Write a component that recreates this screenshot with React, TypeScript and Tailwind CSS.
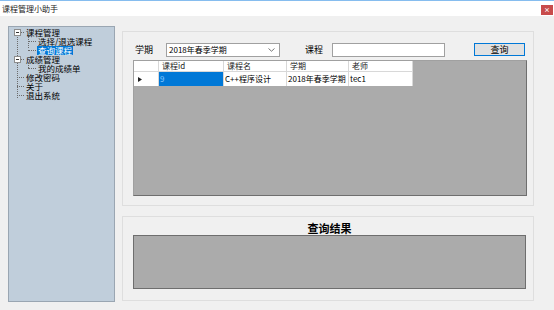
import React from "react";

const font = { fontFamily: '"Noto Sans CJK SC", "Noto Sans", sans-serif' };

const tree = [
  { label: "课程管理", depth: 0, toggle: true },
  { label: "选择/退选课程", depth: 1 },
  { label: "查询课程", depth: 1, selected: true },
  { label: "成绩管理", depth: 0, toggle: true },
  { label: "我的成绩单", depth: 1 },
  { label: "修改密码", depth: 0 },
  { label: "关于", depth: 0 },
  { label: "退出系统", depth: 0 },
];

const cols = [
  { name: "课程id", w: "w-[65px]" },
  { name: "课程名", w: "w-[63px]" },
  { name: "学期", w: "w-[62px]" },
  { name: "老师", w: "w-[64px]" },
];

const row = ["9", "C++程序设计", "2018年春季学期", "tec1"];

function Tree() {
  return (
    <div className="relative w-[107px] h-[276px] mt-[10px] bg-[#c0cedb] border border-[#9aa6b2] pt-[1px] text-[8.5px] text-black">
      {/* dotted connector lines */}
      <div className="absolute left-[8px] top-[8px] h-[63px] border-l border-dotted border-[#6b6b6b]" />
      <div className="absolute left-[19px] top-[9px] h-[12px] border-l border-dotted border-[#6b6b6b]" />
      <div className="absolute left-[19px] top-[36px] h-[5px] border-l border-dotted border-[#6b6b6b]" />
      {tree.map((t, i) => (
        <div key={i} className="relative flex items-center h-[9px]">
          <div className={t.depth === 0 ? "w-[16px] shrink-0" : "w-[28px] shrink-0"} />
          <div className={t.depth === 0 ? "absolute left-[8px] top-[4px] w-[7px] border-t border-dotted border-[#6b6b6b]" : "absolute left-[19px] top-[4px] w-[8px] border-t border-dotted border-[#6b6b6b]"} />
          {t.toggle && (
            <div className="absolute left-[5px] top-[1px] w-[7px] h-[7px] bg-white border border-[#8d8d8d] flex items-center justify-center">
              <div className="w-[3px] h-px bg-[#333]" />
            </div>
          )}
          <span className={t.selected ? "bg-[#0078d7] text-white px-px leading-[9px]" : "px-px leading-[9px]"}>{t.label}</span>
        </div>
      ))}
    </div>
  );
}

export default function App() {
  return (
    <div className="w-[554px] h-[310px] bg-[#f0f0f0] overflow-hidden text-black" style={font}>
      {/* title bar */}
      <div className="h-[16px] bg-white border-t border-[#86bdef] flex items-center justify-between pl-[2px] pr-[1px]">
        <span className="text-[8px] leading-[8px] text-[#222]">课程管理小助手</span>
        <div className="w-[12px] h-[10px] bg-[#c84b4b] flex items-center justify-center mt-[2px]">
          <span className="text-white text-[6px] leading-[6px] font-bold">×</span>
        </div>
      </div>

      <div className="flex pl-[8px]">
        <Tree />

        <div className="flex flex-col ml-[7px] mt-[15px] w-[412px] gap-[10px]">
          {/* query group */}
          <div className="h-[175px] border border-[#dedede] pl-[10px] pr-[6px] pt-[10px]">
            <div className="flex items-center h-[15px] text-[9px] leading-[9px]">
              <span className="ml-[2px] w-[31px]">学期</span>
              <div className="w-[114px] h-[14px] bg-white border border-[#a0a0a0] flex items-center justify-between pl-[2px] pr-[4px] text-[8px]">
                <span>2018年春季学期</span>
                <svg width="7" height="4" viewBox="0 0 7 4"><path d="M0.5 0.5 L3.5 3.2 L6.5 0.5" fill="none" stroke="#555" strokeWidth="0.8" /></svg>
              </div>
              <span className="ml-[25px] w-[27px]">课程</span>
              <div className="w-[113px] h-[14px] bg-white border border-[#a0a0a0]" />
              <div className="ml-[29px] w-[51px] h-[13px] bg-[#e1e1e1] border border-[#0078d7] flex items-center justify-center text-[9px]">查询</div>
            </div>

            <div className="mt-[3px] h-[136px] bg-[#ababab] border border-[#6e6e6e] border-t-[#a0a0a0] border-l-[#a0a0a0]">
              <div className="flex w-fit text-[8px] leading-[8px]">
                <div className="flex flex-col">
                  <div className="w-[25px] h-[11px] bg-white border-r border-b border-[#d8d8d8]" />
                  <div className="w-[25px] h-[14px] bg-white border-r border-[#d8d8d8] flex items-center pl-[4px]">
                    <svg width="4" height="5" viewBox="0 0 4 5"><path d="M0 0 L4 2.5 L0 5 Z" fill="#222" /></svg>
                  </div>
                </div>
                {cols.map((c, i) => (
                  <div key={c.name} className="flex flex-col">
                    <div className={`${c.w} h-[11px] bg-white border-r border-b border-[#d8d8d8] flex items-center pl-[3px] text-[#222]`}>
                      {c.name}
                    </div>
                    <div
                      className={
                        i === 0
                          ? `${c.w} h-[14px] bg-[#0078d7] text-[#8ac8ff] border-r border-[#d8d8d8] flex items-center pl-[1px]`
                          : `${c.w} h-[14px] bg-white border-r border-[#d8d8d8] flex items-center pl-[1px]`
                      }
                    >
                      {row[i]}
                    </div>
                  </div>
                ))}
              </div>
            </div>
          </div>

          {/* result group */}
          <div className="h-[85px] border border-[#dedede] pl-[10px] pr-[7px] pt-[5px]">
            <div className="text-center text-[11px] leading-[12px] font-bold">查询结果</div>
            <div className="mt-[1px] h-[54px] bg-[#ababab] border border-[#6e6e6e]" />
          </div>
        </div>
      </div>
    </div>
  );
}
